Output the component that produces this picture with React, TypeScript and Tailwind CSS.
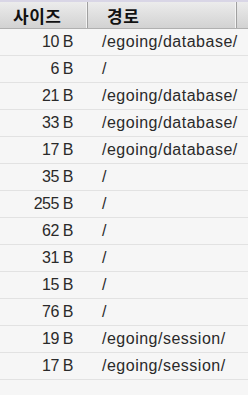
import React from "react";

const rows: [string, string][] = [
  ["10 B", "/egoing/database/"],
  ["6 B", "/"],
  ["21 B", "/egoing/database/"],
  ["33 B", "/egoing/database/"],
  ["17 B", "/egoing/database/"],
  ["35 B", "/"],
  ["255 B", "/"],
  ["62 B", "/"],
  ["31 B", "/"],
  ["15 B", "/"],
  ["76 B", "/"],
  ["19 B", "/egoing/session/"],
  ["17 B", "/egoing/session/"],
];

export default function App() {
  return (
    <div
      className="w-[248px] h-[395px] overflow-hidden bg-[#f6f6f6] text-[#2a2a2a]"
      style={{ fontFamily: '"Liberation Sans", "Noto Sans CJK KR", sans-serif' }}
    >
      <div className="h-[29px] grid grid-cols-[88px_149px_11px] border-t-2 border-[#d9d6e6] border-b border-b-[#b0b0b0] bg-gradient-to-b from-[#ececec] to-[#d2d2d2]">
        <div className="flex items-center pl-[13px] border-r border-[#a0a0a0] shadow-[inset_-1px_0_0_#f4f4f4]">
          <span className="text-[17px] font-bold leading-none text-[#111] tracking-[0.5px]" style={{ fontFamily: '"Noto Sans CJK KR", sans-serif' }}>
            사이즈
          </span>
        </div>
        <div className="flex items-center pl-[19px] border-r border-[#a0a0a0] shadow-[inset_-1px_0_0_#f4f4f4]">
          <span className="text-[17px] font-bold leading-none text-[#111] tracking-[0.5px]" style={{ fontFamily: '"Noto Sans CJK KR", sans-serif' }}>
            경로
          </span>
        </div>
        <div />
      </div>
      {rows.map(([size, path], i) => (
        <div key={i} className="h-[27px] grid grid-cols-[88px_160px] border-b border-[#e2e2e2]">
          <div className="flex items-center justify-end pr-[15px] text-[16px] tracking-[-0.5px]">{size}</div>
          <div className="flex items-center pl-[14px] text-[16px] tracking-[0.5px]">{path}</div>
        </div>
      ))}
    </div>
  );
}
